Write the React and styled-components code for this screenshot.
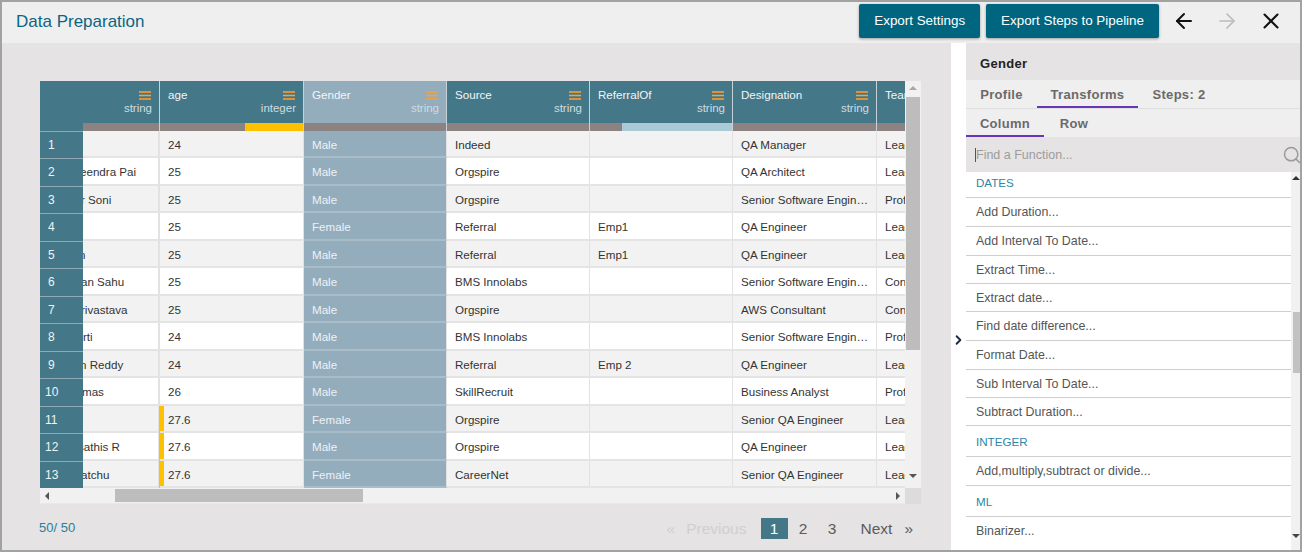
import React from 'react';
import styled, { createGlobalStyle } from 'styled-components';
import { ArrowLeft, ArrowRight, X, ChevronRight, Search } from 'lucide-react';

const GlobalStyle = createGlobalStyle`
  html, body {
    margin: 0;
    padding: 0;
    background: #fff;
    font-family: "Liberation Sans", Arial, sans-serif;
  }
  * { box-sizing: border-box; }
`;

const Frame = styled.div`
  width: 1302px;
  height: 552px;
  border: 2px solid #a2a2a2;
  display: flex;
  flex-direction: column;
  overflow: hidden;
`;

const TopBar = styled.header`
  height: 41px;
  flex: none;
  background: #efefef;
  display: flex;
  align-items: center;
  justify-content: space-between;
  padding: 0 7px 0 14px;
`;

const Title = styled.h1`
  margin: 0 0 2px;
  font-size: 17px;
  font-weight: 400;
  color: #0a6684;
`;

const TopActions = styled.div`
  display: flex;
  align-items: center;
`;

const PrimaryButton = styled.button`
  height: 34px;
  margin: 0 0 4px 6px;
  padding: 0 15px;
  border: 0;
  border-radius: 2px;
  background: #006680;
  color: #fff;
  font: 13.4px "Liberation Sans", Arial, sans-serif;
  box-shadow: 0 1px 3px rgba(0, 0, 0, 0.35);
`;

const NavIcons = styled.div`
  display: flex;
  margin-left: 3px;
`;

const IconButton = styled.button`
  width: ${(p) => (p.$wide ? 45 : 43)}px;
  height: 34px;
  margin-bottom: 4px;
  padding: 0;
  border: 0;
  background: none;
  display: flex;
  align-items: center;
  justify-content: center;
  color: ${(p) => (p.$muted ? '#bcbcbc' : '#111')};
`;

const Content = styled.div`
  flex: 1;
  min-height: 0;
  display: flex;
`;

const Workspace = styled.main`
  width: 949px;
  flex: none;
  background: #e5e3e4;
  padding: 38px 30px 0 38px;
  display: flex;
  flex-direction: column;
`;

const Table = styled.div`
  width: 881px;
  height: 423px;
  flex: none;
  display: grid;
  grid-template-columns: 865px 16px;
  grid-template-rows: 407px 16px;
`;

const Sheet = styled.div`
  overflow: hidden;
  background: #fff;
`;

const columns = '43px 77px 144px 143px 143px 143px 144px 28px';

const HeadRow = styled.div`
  display: grid;
  grid-template-columns: ${columns};
  height: 50px;
`;

const RowNumberHead = styled.div`
  background: #447888;
`;

const HeadCell = styled.div`
  overflow: hidden;
  display: flex;
  flex-direction: column;
  background: ${(p) => (p.$active ? '#93adbc' : '#447888')};
  border-right: 1px solid #c6d2d7;
  &:last-child { border-right: 0; }
`;

const HeadBody = styled.div`
  flex: 1;
  min-height: 0;
  display: flex;
  justify-content: space-between;
  padding: 7px 7px 0 8px;
  color: #f1f6f8;
  font-size: 11.6px;
  line-height: 14px;
  white-space: nowrap;
`;

const HeadMeta = styled.div`
  display: flex;
  flex-direction: column;
  align-items: flex-end;
  color: #cfdbe0;
  font-size: 11.5px;
  line-height: 13px;
`;

const MenuGlyph = styled.svg`
  width: 12px;
  height: 9px;
  margin: 3px 1px 2px 0;
  display: block;
`;

const QualityBar = styled.div`
  height: 8px;
  flex: none;
  background: #8c8282;
  display: flex;
  justify-content: flex-end;
`;

const QualityFill = styled.div`
  width: ${(p) => p.$width}px;
  background: ${(p) => p.$color};
`;

const Rows = styled.div`
  height: 357px;
  overflow: hidden;
`;

const Row = styled.div`
  display: grid;
  grid-template-columns: ${columns};
  height: ${(p) => (p.$odd ? 27 : 28)}px;
  background: ${(p) => (p.$odd ? '#f2f2f2' : '#fff')};
`;

const RowNumber = styled.div`
  position: relative;
  z-index: 1;
  background: #447888;
  color: #eef4f6;
  font-size: 12px;
  line-height: 26px;
  padding-left: ${(p) => (p.$wide ? 5 : 8)}px;
  border-top: 1px solid #8fa9b5;
`;

const Cell = styled.div`
  overflow: hidden;
  white-space: nowrap;
  text-overflow: ellipsis;
  padding: 0 4px 0 8px;
  font-size: 11.6px;
  line-height: 27px;
  color: ${(p) => (p.$active ? '#eef1fa' : '#333')};
  background: ${(p) => (p.$active ? '#93adbc' : 'transparent')};
  border-right: 1px solid #e2e2e2;
  border-bottom: 2px solid ${(p) => (p.$active ? '#a9bdc9' : '#e4e4e4')};
  box-shadow: ${(p) => (p.$flag ? 'inset 4px 0 0 #ffc000, -1px 0 0 #ffc000' : 'none')};
`;

const NameCell = styled(Cell)`
  padding: 0;
  text-overflow: clip;
  border-right-width: 2px;
`;

const TeamCell = styled(Cell)`
  padding-right: 0;
  text-overflow: clip;
  border-right: 0;
`;

const NameText = styled.span`
  display: inline-block;
  margin-left: ${(p) => p.$shift}px;
`;

const VScroll = styled.div`
  background: #f1f1f1;
  display: flex;
  flex-direction: column;
  align-items: center;
  padding-top: 5px;
`;

const VThumb = styled.div`
  width: 14px;
  height: 253px;
  margin-top: 7px;
  background: #bdbdbd;
`;

const HScroll = styled.div`
  background: #f1f1f1;
  display: flex;
  align-items: center;
  padding: 0 5px;
  border-bottom: 1px solid #e9e9e9;
`;

const HThumb = styled.div`
  width: 248px;
  height: 13px;
  margin-left: 66px;
  margin-right: auto;
  background: #bdbdbd;
`;

const Corner = styled.div`
  background: #dcdcdc;
`;

const Arrow = styled.span`
  width: 0;
  height: 0;
  flex: none;
  display: block;
  border-style: solid;
  border-color: transparent;
  ${(p) => p.$dir === 'up' && `border-width: 0 4px 4px; border-bottom-color: ${p.$color || '#a8a8a8'};`}
  ${(p) => p.$dir === 'down' && `border-width: 4px 4px 0; border-top-color: ${p.$color || '#555'};`}
  ${(p) => p.$dir === 'left' && 'border-width: 4px 4px 4px 0; border-right-color: #555;'}
  ${(p) => p.$dir === 'right' && 'border-width: 4px 0 4px 4px; border-left-color: #555;'}
`;

const VBottomArrow = styled(Arrow)`
  margin-top: 124px;
`;

const Footer = styled.div`
  display: flex;
  align-items: center;
  justify-content: space-between;
  margin-top: 14px;
  height: 21px;
`;

const Count = styled.span`
  margin: 0 0 3px -1px;
  font-size: 13px;
  color: #2c7d9b;
`;

const Pager = styled.nav`
  display: flex;
  align-items: center;
  font-size: 15.5px;
  color: #5b5b5b;
  padding-right: 8px;
`;

const PagerText = styled.span`
  color: ${(p) => (p.$disabled ? '#d0d0d0' : '#5b5b5b')};
  margin-left: ${(p) => p.$lead || 0}px;
  margin-right: ${(p) => p.$gap || 0}px;
`;

const PageNumber = styled.span`
  width: 27px;
  height: 21px;
  margin-right: 2px;
  line-height: 21px;
  text-align: center;
  background: ${(p) => (p.$current ? '#447888' : 'transparent')};
  color: ${(p) => (p.$current ? '#fff' : '#5b5b5b')};
`;

const CollapseRail = styled.div`
  width: 15px;
  flex: none;
  background: #fff;
  display: flex;
  align-items: center;
  justify-content: center;
  padding-top: 87px;
  color: #1f2a44;
`;

const SidePanel = styled.aside`
  flex: 1;
  min-width: 0;
  display: flex;
  flex-direction: column;
  background: #efefef;
`;

const PanelTitle = styled.div`
  height: 37px;
  flex: none;
  background: #e5e3e4;
  padding: 0 14px;
  font-size: 13px;
  font-weight: 700;
  line-height: 41px;
  letter-spacing: 0.3px;
  color: #222;
`;

const TabRow = styled.div`
  height: ${(p) => p.$height}px;
  flex: none;
  display: flex;
  border-bottom: ${(p) => (p.$lined ? '1px solid #dedede' : '0')};
`;

const Tab = styled.div`
  width: ${(p) => p.$width}px;
  text-align: center;
  font-size: 13px;
  font-weight: 700;
  letter-spacing: 0.3px;
  line-height: 29px;
  color: #6a6a6a;
  border-bottom: 2px solid ${(p) => (p.$selected ? '#6a35b8' : 'transparent')};
`;

const SearchBar = styled.div`
  height: 35px;
  flex: none;
  background: #e5e3e4;
  display: flex;
  align-items: center;
  padding-left: 9px;
  color: #9a9a9a;
`;

const Caret = styled.span`
  width: 1px;
  height: 14px;
  flex: none;
  background: #6a35b8;
`;

const SearchInput = styled.input`
  flex: 1;
  min-width: 0;
  height: 100%;
  border: 0;
  outline: 0;
  padding: 0;
  background: none;
  font: 12.5px "Liberation Sans", Arial, sans-serif;
  &::placeholder { color: #9c9c9c; opacity: 1; }
`;

const SearchGlyph = styled(Search)`
  flex: none;
  margin-right: -2px;
`;

const ListArea = styled.div`
  flex: 1;
  min-height: 0;
  display: flex;
  background: #fff;
`;

const FunctionList = styled.ul`
  flex: 1;
  min-width: 0;
  margin: 0;
  padding: 0;
  list-style: none;
  overflow: hidden;
`;

const FunctionItem = styled.li`
  height: ${(p) => p.$height}px;
  padding-left: 10px;
  font-size: ${(p) => (p.$group ? 11.6 : 12.4)}px;
  line-height: ${(p) => (p.$group ? 31 : 29)}px;
  color: ${(p) => (p.$group ? '#2a87a6' : '#555')};
  border-bottom: 1px solid #cfcfcf;
  &:first-child { line-height: 22px; }
  &:last-child { border-bottom: 0; }
`;

const ListScroll = styled.div`
  width: 9px;
  flex: none;
  background: #f1f1f1;
  display: flex;
  flex-direction: column;
  align-items: flex-end;
  padding-top: 4px;
`;

const ListThumb = styled.div`
  width: 7px;
  height: 61px;
  margin-top: 132px;
  background: #c2c2c2;
`;

const ListBottomArrow = styled(Arrow)`
  margin-top: 161px;
`;

const people = [
  { n: 1, name: '', shift: 0, age: '24', gender: 'Male', source: 'Indeed', ref: '', role: 'QA Manager', team: 'Lead' },
  { n: 2, name: 'eendra Pai', shift: -3, age: '25', gender: 'Male', source: 'Orgspire', ref: '', role: 'QA Architect', team: 'Lead' },
  { n: 3, name: 'r Soni', shift: -2, age: '25', gender: 'Male', source: 'Orgspire', ref: '', role: 'Senior Software Engineer', team: 'Prof' },
  { n: 4, name: '', shift: 0, age: '25', gender: 'Female', source: 'Referral', ref: 'Emp1', role: 'QA Engineer', team: 'Lead' },
  { n: 5, name: 'n', shift: -4, age: '25', gender: 'Male', source: 'Referral', ref: 'Emp1', role: 'QA Engineer', team: 'Lead' },
  { n: 6, name: 'an Sahu', shift: -2, age: '25', gender: 'Male', source: 'BMS Innolabs', ref: '', role: 'Senior Software Engineer', team: 'Con' },
  { n: 7, name: 'rivastava', shift: -2, age: '25', gender: 'Male', source: 'Orgspire', ref: '', role: 'AWS Consultant', team: 'Con' },
  { n: 8, name: 'rti', shift: 0, age: '24', gender: 'Male', source: 'BMS Innolabs', ref: '', role: 'Senior Software Engineer', team: 'Prof' },
  { n: 9, name: 'n Reddy', shift: -3, age: '24', gender: 'Male', source: 'Referral', ref: 'Emp 2', role: 'QA Engineer', team: 'Lead' },
  { n: 10, name: 'mas', shift: -1, age: '26', gender: 'Male', source: 'SkillRecruit', ref: '', role: 'Business Analyst', team: 'Prof' },
  { n: 11, name: '', shift: 0, age: '27.6', gender: 'Female', source: 'Orgspire', ref: '', role: 'Senior QA Engineer', team: 'Lead', flag: true },
  { n: 12, name: 'sathis R', shift: -5, age: '27.6', gender: 'Male', source: 'Orgspire', ref: '', role: 'QA Engineer', team: 'Lead', flag: true },
  { n: 13, name: 'atchu', shift: -2, age: '27.6', gender: 'Female', source: 'CareerNet', ref: '', role: 'Senior QA Engineer', team: 'Lead', flag: true },
];

const heads = [
  { title: '', type: 'string' },
  { title: 'age', type: 'integer', fill: 58, color: '#ffc000' },
  { title: 'Gender', type: 'string', active: true },
  { title: 'Source', type: 'string' },
  { title: 'ReferralOf', type: 'string', fill: 110, color: '#a9cad6' },
  { title: 'Designation', type: 'string' },
  { title: 'Team', type: '', clipped: true },
];

const functions = [
  { label: 'DATES', group: true, height: 26 },
  { label: 'Add Duration...', height: 29 },
  { label: 'Add Interval To Date...', height: 28.5 },
  { label: 'Extract Time...', height: 28.5 },
  { label: 'Extract date...', height: 28 },
  { label: 'Find date difference...', height: 29 },
  { label: 'Format Date...', height: 28.5 },
  { label: 'Sub Interval To Date...', height: 28.5 },
  { label: 'Subtract Duration...', height: 28 },
  { label: 'INTEGER', group: true, height: 31 },
  { label: 'Add,multiply,subtract or divide...', height: 29 },
  { label: 'ML', group: true, height: 31 },
  { label: 'Binarizer...', height: 30 },
];

const MenuIcon = () => (
  <MenuGlyph viewBox="0 0 12 9">
    <path d="M0 1h12M0 4.5h12M0 8h12" stroke="#ff9f2e" strokeWidth="1.5" fill="none" />
  </MenuGlyph>
);

const App = () => {
  return (
    <>
      <GlobalStyle />
      <Frame>
        <TopBar>
          <Title>Data Preparation</Title>
          <TopActions>
            <PrimaryButton>Export Settings</PrimaryButton>
            <PrimaryButton>Export Steps to Pipeline</PrimaryButton>
            <NavIcons>
              <IconButton><ArrowLeft size={24} strokeWidth={2} /></IconButton>
              <IconButton $muted><ArrowRight size={24} strokeWidth={1.7} /></IconButton>
              <IconButton $wide><X size={26} strokeWidth={1.9} /></IconButton>
            </NavIcons>
          </TopActions>
        </TopBar>
        <Content>
          <Workspace>
            <Table>
              <Sheet>
                <HeadRow>
                  <RowNumberHead />
                  {heads.map((h) => (
                    <HeadCell key={h.title || 'name'} $active={h.active}>
                      <HeadBody>
                        <span>{h.title}</span>
                        {!h.clipped && (
                          <HeadMeta>
                            <MenuIcon />
                            {h.type}
                          </HeadMeta>
                        )}
                      </HeadBody>
                      <QualityBar>
                        {h.fill && <QualityFill $width={h.fill} $color={h.color} />}
                      </QualityBar>
                    </HeadCell>
                  ))}
                </HeadRow>
                <Rows>
                  {people.map((p) => (
                    <Row key={p.n} $odd={p.n % 2 === 1}>
                      <RowNumber $wide={p.n > 9}>{p.n}</RowNumber>
                      <NameCell><NameText $shift={p.shift}>{p.name}</NameText></NameCell>
                      <Cell $flag={p.flag}>{p.age}</Cell>
                      <Cell $active>{p.gender}</Cell>
                      <Cell>{p.source}</Cell>
                      <Cell>{p.ref}</Cell>
                      <Cell>{p.role}</Cell>
                      <TeamCell>{p.team}</TeamCell>
                    </Row>
                  ))}
                </Rows>
              </Sheet>
              <VScroll>
                <Arrow $dir="up" />
                <VThumb />
                <VBottomArrow $dir="down" />
              </VScroll>
              <HScroll>
                <Arrow $dir="left" />
                <HThumb />
                <Arrow $dir="right" />
              </HScroll>
              <Corner />
            </Table>
            <Footer>
              <Count>50/ 50</Count>
              <Pager>
                <PagerText $disabled $gap={11}>«</PagerText>
                <PagerText $disabled $gap={14}>Previous</PagerText>
                <PageNumber $current>1</PageNumber>
                <PageNumber>2</PageNumber>
                <PageNumber>3</PageNumber>
                <PagerText $lead={13} $gap={12}>Next</PagerText>
                <PagerText>»</PagerText>
              </Pager>
            </Footer>
          </Workspace>
          <CollapseRail><ChevronRight size={16} strokeWidth={3} /></CollapseRail>
          <SidePanel>
            <PanelTitle>Gender</PanelTitle>
            <TabRow $height={29} $lined>
              <Tab $width={71}>Profile</Tab>
              <Tab $width={101} $selected>Transforms</Tab>
              <Tab $width={82}>Steps: 2</Tab>
            </TabRow>
            <TabRow $height={28}>
              <Tab $width={78} $selected>Column</Tab>
              <Tab $width={60}>Row</Tab>
            </TabRow>
            <SearchBar>
              <Caret />
              <SearchInput placeholder="Find a Function..." />
              <SearchGlyph size={20} strokeWidth={1.8} />
            </SearchBar>
            <ListArea>
              <FunctionList>
                {functions.map((f) => (
                  <FunctionItem key={f.label} $group={f.group} $height={f.height}>{f.label}</FunctionItem>
                ))}
              </FunctionList>
              <ListScroll>
                <Arrow $dir="up" $color="#333" />
                <ListThumb />
                <ListBottomArrow $dir="down" $color="#444" />
              </ListScroll>
            </ListArea>
          </SidePanel>
        </Content>
      </Frame>
    </>
  );
};

export default App;
